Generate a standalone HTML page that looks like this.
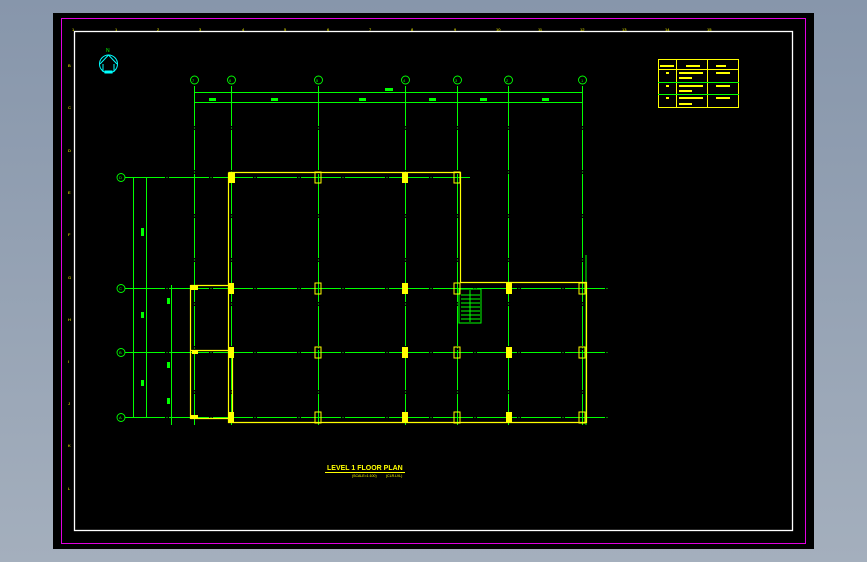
<!DOCTYPE html><html><head><style>body{margin:0;width:867px;height:562px;overflow:hidden;background:linear-gradient(180deg,#8796ab,#a4afbd)}svg{position:absolute;left:0;top:0}</style></head><body>
<svg width="867" height="562" viewBox="0 0 867 562" font-family="Liberation Sans, sans-serif">
<rect x="53" y="13" width="761" height="536" fill="#000"/>
<rect x="61.5" y="18.5" width="744" height="525" fill="none" stroke="#e000e0"/>
<rect x="74.5" y="31.5" width="718" height="499" fill="none" stroke="#fff" stroke-width="1.3"/>
<g fill="#ff0" font-size="4">
<text x="72" y="31">1</text><text x="115" y="31">1</text><text x="157" y="31">2</text><text x="199" y="31">3</text><text x="242" y="31">4</text><text x="284" y="31">5</text><text x="327" y="31">6</text><text x="369" y="31">7</text><text x="411" y="31">8</text><text x="454" y="31">9</text><text x="496" y="31">10</text><text x="538" y="31">11</text><text x="580" y="31">12</text><text x="622" y="31">13</text><text x="665" y="31">14</text><text x="707" y="31">15</text>
<text x="68" y="67">B</text><text x="68" y="109">C</text><text x="68" y="152">D</text><text x="68" y="194">E</text><text x="68" y="236">F</text><text x="68" y="279">G</text><text x="68" y="321">H</text><text x="68" y="363">I</text><text x="68" y="405">J</text><text x="68" y="447">K</text><text x="68" y="490">L</text>
</g>
<g stroke="#0ff" fill="none"><circle cx="108.5" cy="64" r="9"/><path d="M100 64 L108.5 55 L117 64 M103 64 V72 M114 64 V72"/><rect x="105" y="71" width="7" height="2" fill="#0ff"/></g>
<text x="106" y="52" fill="#0f0" font-size="5">N</text>
<g stroke="#0f0" stroke-width="1" fill="none">
<path d="M194.5 86V425 M231.5 86V425 M318.5 86V425 M405.5 86V425 M457.5 86V425 M508.5 86V425 M582.5 86V425" stroke-dasharray="40 1.5 1 1.5"/>
<path d="M125 177.5H470 M125 288.5H608 M125 352.5H608 M125 417.5H608" stroke-dasharray="40 1.5 1 1.5"/>
<path d="M194 92.5H583 M194 102.5H583 M133.5 177V417 M146.5 177V417 M171.5 285V425 M586 255V425"/>
<g stroke-width="0.9"><circle cx="194.5" cy="80" r="4"/><circle cx="231.5" cy="80" r="4"/><circle cx="318.5" cy="80" r="4"/><circle cx="405.5" cy="80" r="4"/><circle cx="457.5" cy="80" r="4"/><circle cx="508.5" cy="80" r="4"/><circle cx="582.5" cy="80" r="4"/>
<circle cx="121" cy="177.5" r="4"/><circle cx="121" cy="288.5" r="4"/><circle cx="121" cy="352.5" r="4"/><circle cx="121" cy="417.5" r="4"/></g>
<rect x="459" y="289" width="22" height="34"/><path d="M461 295H480 M461 299H480 M461 303H480 M461 307H480 M461 311H480 M461 315H480 M461 319H480 M470 290V322"/>
</g>
<g fill="#0f0" font-size="4"><text x="192" y="82">7</text><text x="229" y="82">6</text><text x="316" y="82">5</text><text x="403" y="82">4</text><text x="455" y="82">3</text><text x="506" y="82">2</text><text x="581" y="82">1</text>
<text x="119" y="179">D</text><text x="119" y="290">C</text><text x="119" y="354">B</text><text x="119" y="419">A</text>
<rect x="209" y="98" width="7" height="3"/><rect x="271" y="98" width="7" height="3"/><rect x="359" y="98" width="7" height="3"/><rect x="429" y="98" width="7" height="3"/><rect x="480" y="98" width="7" height="3"/><rect x="542" y="98" width="7" height="3"/><rect x="385" y="88" width="8" height="3"/>
<rect x="141" y="228" width="3" height="8"/><rect x="141" y="312" width="3" height="6"/><rect x="141" y="380" width="3" height="6"/><rect x="167" y="298" width="3" height="6"/><rect x="167" y="362" width="3" height="6"/><rect x="167" y="398" width="3" height="6"/></g>
<g stroke="#ff0" fill="none" stroke-width="1.2">
<path d="M228.5 172.5H460.5V282.5H586.5V422.5H228.5V172.5"/>
<path d="M190.5 285.5H228.5 M190.5 285V419 M190.5 418.5H228.5 M190.5 350.5H228.5 M232.5 352V421"/>
</g>
<g fill="#ff0">
<rect x="229" y="172" width="6" height="11"/><rect x="315" y="172" width="6" height="11" fill="none" stroke="#ff0"/><rect x="402" y="172" width="6" height="11"/><rect x="454" y="172" width="6" height="11" fill="none" stroke="#ff0"/>
<rect x="228" y="283" width="6" height="11"/><rect x="315" y="283" width="6" height="11" fill="none" stroke="#ff0"/><rect x="402" y="283" width="6" height="11"/><rect x="454" y="283" width="6" height="11" fill="none" stroke="#ff0"/><rect x="506" y="283" width="6" height="11"/><rect x="579" y="283" width="6" height="11" fill="none" stroke="#ff0"/>
<rect x="228" y="347" width="6" height="11"/><rect x="315" y="347" width="6" height="11" fill="none" stroke="#ff0"/><rect x="402" y="347" width="6" height="11"/><rect x="454" y="347" width="6" height="11" fill="none" stroke="#ff0"/><rect x="506" y="347" width="6" height="11"/><rect x="579" y="347" width="6" height="11" fill="none" stroke="#ff0"/>
<rect x="228" y="412" width="6" height="11"/><rect x="315" y="412" width="6" height="11" fill="none" stroke="#ff0"/><rect x="402" y="412" width="6" height="11"/><rect x="454" y="412" width="6" height="11" fill="none" stroke="#ff0"/><rect x="506" y="412" width="6" height="11"/><rect x="579" y="412" width="6" height="11" fill="none" stroke="#ff0"/>
<rect x="190" y="286" width="8" height="4"/><rect x="190" y="415" width="8" height="4"/><rect x="192" y="350" width="6" height="4"/>
<text x="327" y="470" font-size="7" font-weight="bold">LEVEL 1 FLOOR PLAN</text>
<text x="352" y="477" font-size="3.5">(SCALE=1:100)</text><text x="386" y="477" font-size="3.5">(CLR.LVL)</text>
</g>
<path d="M325 472.5H405" stroke="#ff0"/>
<g stroke="#ff0" fill="none"><rect x="658.5" y="59.5" width="80" height="48"/><path d="M676.5 59V108 M707.5 59V108 M658 69.5H739"/></g>
<path d="M658 82.5H739 M658 94.5H739" stroke="#0f0"/>
<g fill="#ff0"><rect x="660" y="65" width="14" height="2"/><rect x="686" y="65" width="14" height="2"/><rect x="716" y="65" width="10" height="2"/><rect x="679" y="72" width="24" height="2"/><rect x="679" y="77" width="13" height="2"/><rect x="679" y="85" width="24" height="2"/><rect x="679" y="90" width="13" height="2"/><rect x="679" y="97" width="24" height="2"/><rect x="679" y="103" width="13" height="2"/><rect x="716" y="72" width="14" height="2"/><rect x="716" y="85" width="14" height="2"/><rect x="716" y="97" width="14" height="2"/><rect x="666" y="72" width="3" height="2"/><rect x="666" y="85" width="3" height="2"/><rect x="666" y="97" width="3" height="2"/></g>
</svg></body></html>
